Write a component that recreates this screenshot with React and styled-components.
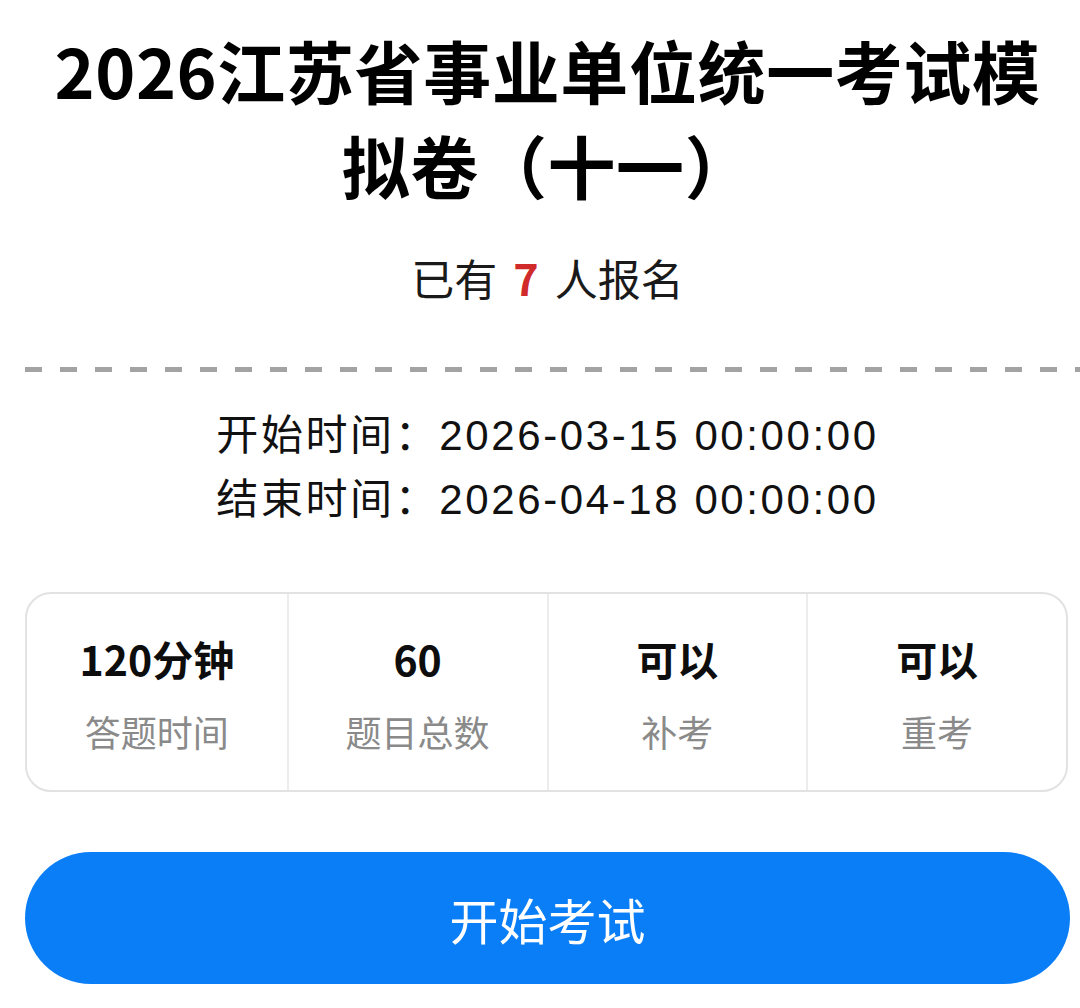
import React from "react";
import styled, { createGlobalStyle } from "styled-components";

const GlobalStyle = createGlobalStyle`
  body {
    margin: 0;
    background: #ffffff;
    font-family: "Noto Sans CJK SC", "Noto Sans", sans-serif;
    color: #111111;
  }
`;

const Page = styled.div`
  width: 1080px;
  box-sizing: border-box;
  padding: 22px 10px 0 25px;
  display: flex;
  flex-direction: column;
`;

const Title = styled.h1`
  margin: 0;
  font-size: 68px;
  line-height: 95px;
  font-weight: 700;
  letter-spacing: 0.6px;
  text-align: center;
  color: #000000;
`;

const Signup = styled.div`
  margin-top: 35px;
  font-size: 43px;
  line-height: 60px;
  text-align: center;
  color: #1a1a1a;
`;

const Count = styled.span`
  color: #d02a2a;
  font-weight: 700;
  margin: 0 16px;
`;

const Dashes = styled.div`
  margin-top: 60px;
  height: 5px;
  margin-right: -10px;
  background-image: linear-gradient(to right, #a3a3a3 17px, transparent 17px);
  background-size: 35px 5px;
  background-repeat: repeat-x;
`;

const Times = styled.div`
  margin-top: 32px;
  display: flex;
  flex-direction: column;
  align-items: center;
`;

const TimeRow = styled.div`
  font-family: "Liberation Sans", "Noto Sans CJK SC", sans-serif;
  font-size: 42px;
  line-height: 64px;
  letter-spacing: 2.6px;
  color: #111111;
  white-space: pre;
`;

const InfoCard = styled.div`
  margin-top: 60px;
  margin-right: 2px;
  display: grid;
  grid-template-columns: repeat(4, 1fr);
  border: 2px solid #e2e2e2;
  border-radius: 26px;
  overflow: hidden;
`;

const InfoCell = styled.div`
  display: flex;
  flex-direction: column;
  align-items: center;
  padding: 39px 0 34px;
  gap: 23px;
  border-left: ${(p) => (p.first ? "none" : "2px solid #ececec")};
`;

const InfoValue = styled.div`
  font-size: 41px;
  line-height: 50px;
  font-weight: 700;
  color: #0d0d0d;
`;

const InfoLabel = styled.div`
  font-size: 36px;
  line-height: 50px;
  color: #8a8a8a;
`;

const StartButton = styled.button`
  margin-top: 60px;
  height: 132px;
  border: none;
  border-radius: 66px;
  background: #0a7ef6;
  color: #ffffff;
  font-family: inherit;
  font-size: 49px;
  font-weight: 400;
  cursor: pointer;
`;

const info = [
  { value: "120分钟", label: "答题时间" },
  { value: "60", label: "题目总数" },
  { value: "可以", label: "补考" },
  { value: "可以", label: "重考" },
];

export default function App() {
  return (
    <>
      <GlobalStyle />
      <Page>
        <Title>
          2026江苏省事业单位统一考试模
          <br />
          拟卷（十一）
        </Title>
        <Signup>
          已有<Count>7</Count>人报名
        </Signup>
        <Dashes />
        <Times>
          <TimeRow>开始时间：2026-03-15 00:00:00</TimeRow>
          <TimeRow>结束时间：2026-04-18 00:00:00</TimeRow>
        </Times>
        <InfoCard>
          {info.map((item, i) => (
            <InfoCell key={i} first={i === 0}>
              <InfoValue>{item.value}</InfoValue>
              <InfoLabel>{item.label}</InfoLabel>
            </InfoCell>
          ))}
        </InfoCard>
        <StartButton>开始考试</StartButton>
      </Page>
    </>
  );
}
